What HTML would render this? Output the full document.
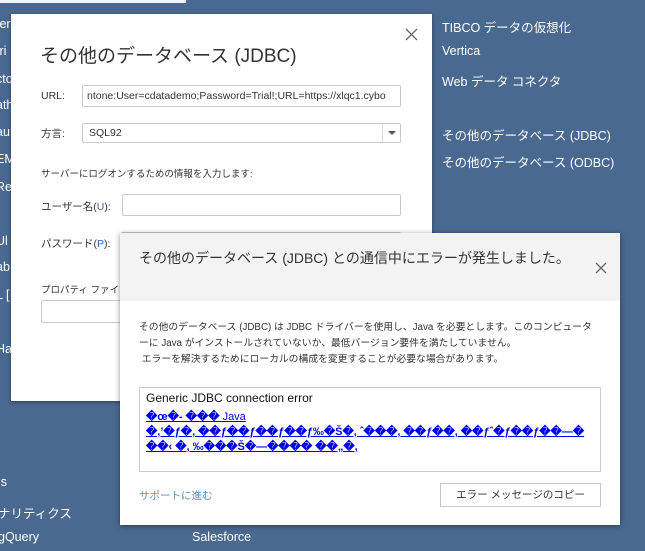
<!DOCTYPE html>
<html><head><meta charset="utf-8"><style>
*{margin:0;padding:0;box-sizing:border-box}
body{width:645px;height:551px;overflow:hidden;background:#4a6990;font-family:"Liberation Sans","Noto Sans CJK JP",sans-serif;position:relative;color:#333}
.bg{position:absolute;color:#fff;font-size:12.5px;white-space:nowrap}
.d1{position:absolute;left:11px;top:14px;width:421px;height:387px;background:#fff;box-shadow:0 1px 4px rgba(0,0,0,.4)}
.d2{position:absolute;left:120px;top:233px;width:500px;height:292px;background:#fff;box-shadow:0 1px 5px rgba(0,0,0,.45)}
.abs{position:absolute;white-space:nowrap}
.inp{position:absolute;border:1px solid #c9c9c9;background:#fff;border-radius:2px}
.lbl{font-size:10.5px;color:#333}
a{color:#0000ee;text-decoration:underline}
</style></head><body>
<div style="position:absolute;left:0;top:0;width:186px;height:3px;background:#f4f4f4"></div>
<div class="bg" style="left:-4px;top:17px">ter</div>
<div class="bg" style="left:-4px;top:44px">tri</div>
<div class="bg" style="left:-4px;top:72px">cto</div>
<div class="bg" style="left:-4px;top:98px">ath</div>
<div class="bg" style="left:-4px;top:125px">au</div>
<div class="bg" style="left:-4px;top:152px">EM</div>
<div class="bg" style="left:-4px;top:180px">Re</div>
<div class="bg" style="left:-4px;top:234px">Ul</div>
<div class="bg" style="left:-4px;top:260px">ab</div>
<div class="bg" style="left:-4px;top:288px">L [</div>
<div class="bg" style="left:-4px;top:342px">Ha</div>
<div class="bg" style="left:-2px;top:475px">ls</div>
<div class="bg" style="left:-2px;top:503px">ナリティクス</div>
<div class="bg" style="left:-2px;top:530px">gQuery</div>
<div class="bg" style="left:192px;top:530px">Salesforce</div>
<div class="bg" style="left:442px;top:17px">TIBCO データの仮想化</div>
<div class="bg" style="left:442px;top:44px">Vertica</div>
<div class="bg" style="left:442px;top:71px">Web データ コネクタ</div>
<div class="bg" style="left:442px;top:125px">その他のデータベース (JDBC)</div>
<div class="bg" style="left:442px;top:152px">その他のデータベース (ODBC)</div>

<div class="d1">
<div class="abs" style="left:29px;top:27px;font-size:19px;color:#333">その他のデータベース (JDBC)</div>
<svg class="abs" style="left:394px;top:14px" width="13" height="13"><path d="M1 1L12 12M12 1L1 12" stroke="#666" stroke-width="1.3"/></svg>
<div class="abs lbl" style="left:30px;top:76px">URL:</div>
<div class="inp" style="left:71px;top:71px;width:319px;height:22px;overflow:hidden"><div class="abs" style="left:4px;top:4px;font-size:10.5px;color:#333">ntone:User=cdatademo;Password=Trial!;URL=https://xlqc1.cybo</div></div>
<div class="abs lbl" style="left:30px;top:112px">方言:</div>
<div class="inp" style="left:71px;top:109px;width:319px;height:20px"><div class="abs" style="left:6px;top:3px;font-size:10.5px">SQL92</div><div class="abs" style="left:299px;top:0;width:1px;height:18px;background:#ddd"></div><svg class="abs" style="left:305px;top:7px" width="8" height="5"><path d="M0 0H8L4 4Z" fill="#555"/></svg></div>
<div class="abs" style="left:30px;top:152px;font-size:9.5px">サーバーにログオンするための情報を入力します:</div>
<div class="abs lbl" style="left:30px;top:185px">ユーザー名(<span style="color:#3a5d9a">U</span>):</div>
<div class="inp" style="left:111px;top:180px;width:279px;height:22px"></div>
<div class="abs lbl" style="left:30px;top:222px">パスワード(<span style="color:#3a5d9a">P</span>):</div>
<div class="inp" style="left:110px;top:218px;width:280px;height:22px"></div>
<div class="abs" style="left:30px;top:268px;font-size:9.5px">プロパティ ファイル:</div>
<div class="inp" style="left:30px;top:286px;width:100px;height:23px"></div>
</div>

<div class="d2">
<div class="abs" style="left:0;top:0;width:500px;height:68px;background:#f3f3f3"></div>
<div class="abs" style="left:19px;top:15px;font-size:14px;color:#333">その他のデータベース (JDBC) との通信中にエラーが発生しました。</div>
<svg class="abs" style="left:475px;top:29px" width="12" height="12"><path d="M1 1L11 11M11 1L1 11" stroke="#666" stroke-width="1.3"/></svg>
<div class="abs" style="left:19px;top:87px;font-size:9.8px;line-height:16px;color:#333">その他のデータベース (JDBC) は JDBC ドライバーを使用し、Java を必要とします。このコンピュータ<br>ーに Java がインストールされていないか、最低バージョン要件を満たしていません。<br>&nbsp;エラーを解決するためにローカルの構成を変更することが必要な場合があります。</div>
<div class="abs" style="left:19px;top:154px;width:462px;height:85px;border:1px solid #ccc"></div>
<div class="abs" style="left:26px;top:158px;font-size:12px;color:#111">Generic JDBC connection error</div>
<div class="abs" style="left:26px;top:177px;font-size:11px;line-height:15px;font-weight:bold"><a>�œ�‑ ��� <span style="font-weight:normal">Java</span></a><br><a>�,’�ƒ�, ��ƒ��ƒ��ƒ��ƒ‰�Š�, ˆ���, ��ƒ��, ��ƒˆ�ƒ��ƒ��—�</a><br><a>��‹ �, ‰���Š�—���� ��„�,</a></div>
<div class="abs" style="left:19px;top:255px;font-size:10.5px;color:#5b8fc0">サポートに進む</div>
<div class="abs" style="left:320px;top:250px;width:161px;height:24px;border:1px solid #c8c8c8;font-size:10.5px;text-align:center;line-height:22px;color:#333">エラー メッセージのコピー</div>
</div>
</body></html>
